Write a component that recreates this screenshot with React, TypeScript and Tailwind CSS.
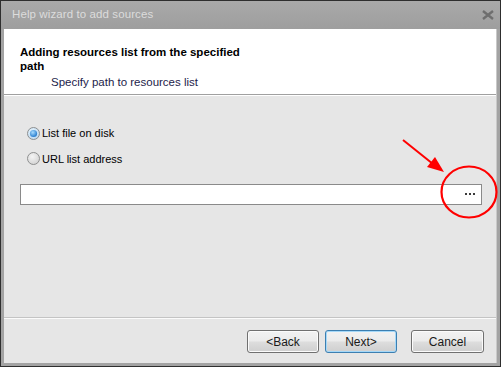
import React from "react";

const font = { fontFamily: '"Liberation Sans", Arial, sans-serif' };

const Radio: React.FC<{ checked?: boolean }> = ({ checked }) => (
  <svg width="13" height="13" viewBox="0 0 13 13" className="shrink-0">
    <defs>
      <radialGradient id={checked ? "rg-on" : "rg-off"} cx="0.4" cy="0.35" r="0.7">
        <stop offset="0" stopColor={checked ? "#e8f6ff" : "#f4f4f4"} />
        <stop offset="1" stopColor={checked ? "#b9d6ee" : "#d2d2d2"} />
      </radialGradient>
      <radialGradient id="dot" cx="0.4" cy="0.35" r="0.7">
        <stop offset="0" stopColor="#a8dcff" />
        <stop offset="1" stopColor="#1a73c9" />
      </radialGradient>
    </defs>
    <circle cx="6.5" cy="6.5" r="6" fill={`url(#${checked ? "rg-on" : "rg-off"})`} stroke="#8e8f8f" strokeWidth="1" />
    {checked && <circle cx="6.5" cy="6.5" r="3.6" fill="url(#dot)" />}
  </svg>
);

const WinButton: React.FC<{ label: string; focused?: boolean; className?: string }> = ({
  label,
  focused,
  className = "",
}) => (
  <button
    className={`h-[23px] w-[72px] rounded-[3px] border text-[12px] text-[#1a1a1a] ${
      focused ? "border-[#3c7fb1] shadow-[inset_0_0_0_1px_#a5d8f8]" : "border-[#707070] shadow-[inset_0_0_0_1px_#fbfbfb]"
    } bg-[linear-gradient(to_bottom,#f2f2f2_0%,#ebebeb_48%,#dddddd_52%,#cfcfcf_100%)] ${className}`}
    style={font}
  >
    {label}
  </button>
);

export default function App() {
  return (
    <div className="relative h-[367px] w-[501px] overflow-hidden" style={font}>
      <div className="flex h-full w-full flex-col border border-[#2e2e2e] bg-[#a3a3a3]">
        {/* title bar */}
        <div className="flex h-[28px] shrink-0 items-center justify-between bg-[linear-gradient(to_bottom,#a9a9a9,#9e9e9e)] pl-[11px] pr-[6px]">
          <span className="text-[11.5px] tracking-[0.1px] text-[#dcdcdc]">Help wizard to add sources</span>
          <svg width="12" height="10" viewBox="0 0 12 10">
            <path d="M1 1 L11 9 M11 1 L1 9" stroke="#6e6e6e" strokeWidth="2.4" />
          </svg>
        </div>

        <div className="mx-[3px] mb-[3px] flex flex-1 flex-col border-r border-[#c9c9c9] bg-[#e6e6e6]">
          {/* header */}
          <div className="h-[66px] shrink-0 border-b border-[#a0a0a0] bg-white pl-[16px] pt-[16px]">
            <div className="w-[236px] text-[11.5px] font-bold leading-[14px] text-black">
              Adding resources list from the specified path
            </div>
            <div className="mt-[2px] pl-[31px] text-[11.5px] leading-[14px] text-[#1c1c4a]">
              Specify path to resources list
            </div>
          </div>

          {/* body */}
          <div className="flex flex-1 flex-col border-t border-white px-[16px] pt-[29px]">
            <label className="flex items-center gap-[2px] pl-[7px] text-[11px] text-black">
              <Radio checked />
              <span>List file on disk</span>
            </label>
            <label className="mt-[9px] flex items-center gap-[2px] pl-[7px] text-[11px] text-black">
              <Radio />
              <span>URL list address</span>
            </label>
            <div className="mt-[17px] flex h-[21px] w-[462px] items-center justify-end border border-[#8a8a8a] bg-white pr-[4px]">
              <svg width="12" height="3" viewBox="0 0 12 3">
                <rect x="0" y="0" width="2" height="2" fill="#3a3a3a" />
                <rect x="4" y="0" width="2" height="2" fill="#3a3a3a" />
                <rect x="8" y="0" width="2" height="2" fill="#3a3a3a" />
              </svg>
            </div>
          </div>

          {/* footer */}
          <div className="flex h-[46px] shrink-0 items-start justify-end border-t border-[#c4c4c4] pr-[12px] pt-[12px] shadow-[inset_0_1px_0_#fbfbfb]">
            <WinButton label="<Back" />
            <WinButton label="Next>" focused className="ml-[6px]" />
            <WinButton label="Cancel" className="ml-[14px] w-[73px]" />
          </div>
        </div>
      </div>

      {/* red annotation */}
      <svg className="pointer-events-none absolute left-0 top-0" width="501" height="367">
        <line x1="403" y1="140" x2="433" y2="164" stroke="#ff0000" strokeWidth="2" />
        <polygon points="444,172 427,167 435,157" fill="#ff0000" />
        <ellipse cx="469" cy="192" rx="27.5" ry="25.5" fill="none" stroke="#ff0000" strokeWidth="2.2" />
      </svg>
    </div>
  );
}
